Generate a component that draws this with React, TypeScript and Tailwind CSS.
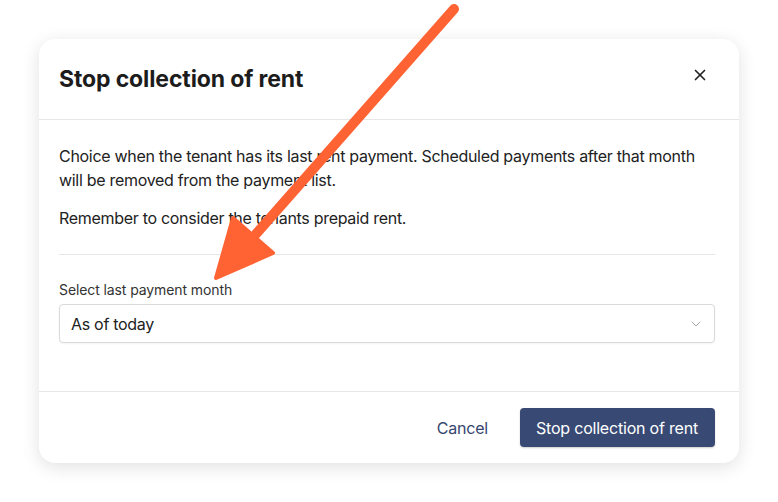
import { X, ChevronDown } from 'lucide-react'

export default function App() {
  return (
    <div className="relative w-[778px] h-[502px] bg-white overflow-hidden font-['Inter','Noto_Sans',sans-serif] text-[#222]">
      <div className="absolute left-[39px] top-[39px] w-[700px] bg-white rounded-2xl shadow-[0_4px_18px_rgba(0,0,0,0.12)]">
        {/* Header */}
        <div className="h-[81px] flex items-center justify-between pl-5 pr-[30px] border-b border-[#e6e6e6]">
          <h2 className="text-[23px] font-bold text-[#1c1c1c] tracking-[-0.12px]">Stop collection of rent</h2>
          <button className="text-[#222] -mt-[8px]">
            <X size={18} strokeWidth={2.2} />
          </button>
        </div>

        {/* Body */}
        <div className="pl-5 pr-6 pt-6 pb-12 tracking-[-0.3px]">
          <p className="text-[16px] leading-6 text-[#222]">
            Choice when the tenant has its last rent payment. Scheduled payments after that month will be removed from the payment list.
          </p>
          <p className="text-[16px] leading-6 mt-[14px] text-[#222]">Remember to consider the tenants prepaid rent.</p>
          <div className="border-t border-[#e6e6e6] mt-6 pt-[25px]">
            <label className="block text-[14px] leading-5 text-[#333] mb-1 tracking-[-0.1px]">Select last payment month</label>
            <div className="h-[39px] flex items-center justify-between border border-[#d9d9d9] rounded-[4px] pl-[11px] pr-[10px] shadow-[0_1px_2px_rgba(0,0,0,0.05)]">
              <span className="text-[16px] text-[#222]">As of today</span>
              <ChevronDown size={16} strokeWidth={1.5} className="text-[#a8a8a8]" />
            </div>
          </div>
        </div>

        {/* Footer */}
        <div className="border-t border-[#e6e6e6] pt-4 pb-4 pl-5 pr-6 flex items-center justify-end gap-8 tracking-[-0.2px]">
          <button className="text-[16px] text-[#36466e]">Cancel</button>
          <button className="h-[39px] pl-4 pr-[17px] rounded-[4px] bg-[#384a74] text-white text-[16px] shadow-[0_1px_2px_rgba(0,0,0,0.2)]">
            Stop collection of rent
          </button>
        </div>
      </div>

      {/* Annotation arrow */}
      <svg className="absolute inset-0 pointer-events-none" width="778" height="502" viewBox="0 0 778 502">
        <line x1="454" y1="9" x2="256" y2="234" stroke="#ff6333" strokeWidth="10" strokeLinecap="round" />
        <path d="M233 218 L273 253 L216 278 Z" fill="#ff6333" stroke="#ff6333" strokeWidth="4" strokeLinejoin="round" />
      </svg>
    </div>
  )
}
